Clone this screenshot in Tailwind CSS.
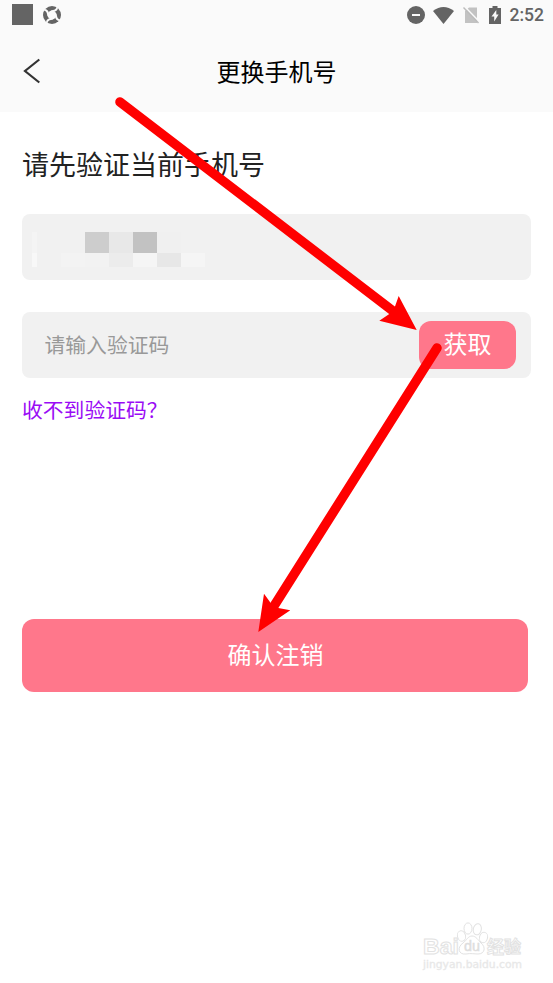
<!DOCTYPE html>
<html lang="zh-CN">
<head>
    <meta charset="UTF-8">
    <meta name="viewport" content="width=device-width, initial-scale=1.0">
    <title>更换手机号</title>
    <script src="https://cdn.jsdelivr.net/npm/@tailwindcss/browser@4"></script>
</head>
<body class="relative h-[983px] w-[553px] overflow-hidden bg-white font-['Noto_Sans_CJK_SC',sans-serif]">
    <div class="h-28 bg-[#fafafa]">
        <!-- Status bar -->
        <div class="flex h-[30px] items-center justify-between pr-[9px] pl-3 text-[#646464]">
            <div class="flex items-center gap-2.5">
                <div class="-mt-px h-[21px] w-[21px] bg-[#646464]"></div>
                <svg class="h-[18px] w-[18px]" viewBox="0 0 18 18">
                    <circle cx="9" cy="9" r="9" fill="currentColor"/>
                    <g fill="#fafafa">
                        <path d="M9 4.300L13.700 9L9 13.700L4.300 9Z"/>
                        <path id="swirl" d="M4.600 9.500C4.500 6.500 6.500 4.500 10 4C12 3.700 13 2.800 13.500 1L15 2C14.500 4.500 13 5.700 10.500 6L8 9Z"/>
                        <use href="#swirl" transform="rotate(90 9 9)"/>
                        <use href="#swirl" transform="rotate(180 9 9)"/>
                        <use href="#swirl" transform="rotate(270 9 9)"/>
                    </g>
                </svg>
            </div>
            <div class="flex items-center">
                <svg class="mr-2 h-[18px] w-[18px]" viewBox="0 0 18 18">
                    <circle cx="9" cy="9" r="9" fill="currentColor"/>
                    <path d="M5 9h8" stroke="#fafafa" stroke-width="2"/>
                </svg>
                <svg class="mr-[9px] h-[17px] w-[21px]" viewBox="0 0 21 17" fill="currentColor">
                    <path d="M0 4Q10.500-4 21 4L10.500 17Z"/>
                </svg>
                <svg class="mr-[10px] h-[18px] w-4" viewBox="0 0 16 18">
                    <path d="M6 1.500H14V17H2V5Z" fill="#c2c2c2"/>
                    <path d="M1.500 .5L16.500 16" stroke="#fafafa" stroke-width="1.600"/>
                    <path d="M.5 1.500L15.500 17" stroke="#bcbcbc" stroke-width="1.400"/>
                </svg>
                <svg class="mr-[9px] h-[18px] w-3" viewBox="0 0 12 18">
                    <path d="M3.500 0h5v2H12v16H0V2h3.500Z" fill="currentColor"/>
                    <path d="M7.300 4L2.500 10.600H5.200V15.500L9.600 8.600H7.300Z" fill="#fafafa"/>
                </svg>
                <span class="mt-0.5 font-[Roboto] text-[17.5px] leading-none font-medium">2:52</span>
            </div>
        </div>
        <!-- Title bar -->
        <div class="grid h-[82px] grid-cols-[1fr_auto_1fr] items-start">
            <svg class="mt-7 ml-[23px] h-[26px] w-[18px]" viewBox="0 0 18 26" fill="none" stroke="#333" stroke-width="2.2">
                <path d="M16.300 1.500L2 13L16.300 24.500"/>
            </svg>
            <h1 class="mt-[23px] text-[24px] leading-9 text-black">更换手机号</h1>
        </div>
    </div>

    <main class="px-[22px]">
        <h2 class="pt-8 text-[27px] leading-10 text-[#222]">请先验证当前手机号</h2>
        <!-- Masked phone number -->
        <div class="mt-[30px] flex h-[66px] rounded-lg bg-[#f1f1f1] pt-[18px] pl-2.5">
            <div class="grid h-[35px] grid-cols-[5px_24px_24px_24px_24px_24px_24px_24px] grid-rows-[21px_14px]">
                <i class="bg-[#f4f4f4]"></i>
                <i></i>
                <i></i>
                <i class="bg-[#cdcdcd]"></i>
                <i class="bg-[#e8e8e8]"></i>
                <i class="bg-[#c2c2c2]"></i>
                <i class="bg-[#f0f0f0]"></i>
                <i></i>
                <i class="bg-[#f8f8f8]"></i>
                <i></i>
                <i class="bg-[#f3f3f3]"></i>
                <i class="bg-[#f2f2f2]"></i>
                <i class="bg-[#ececec]"></i>
                <i class="bg-[#f5f5f5]"></i>
                <i class="bg-[#e7e7e7]"></i>
                <i class="bg-[#f5f5f5]"></i>
            </div>
        </div>
        <!-- Verification code -->
        <div class="mt-8 flex h-[66px] items-center justify-between rounded-lg bg-[#f1f1f1] pr-[15px] pl-[22.5px]">
            <span class="text-[20.8px] text-[#999]">请输入验证码</span>
            <button class="h-12 w-[97px] rounded-xl bg-[#ff778b] pb-1 text-[24px] leading-[44px] text-white">获取</button>
        </div>
        <a class="mt-[15px] block text-[20.8px] leading-8 text-[#9a0cf5]">收不到验证码？</a>
        <button class="mt-[194px] block h-[73px] w-[506px] rounded-xl bg-[#ff778b] pb-1 pl-px text-[24px] text-white">确认注销</button>
    </main>

    <!-- Guide arrows -->
    <svg class="absolute inset-0 h-[983px] w-[553px]" viewBox="0 0 553 983" fill="#f00">
        <path d="M120 102L393 311M437 348L274 606" stroke="#f00" stroke-width="9.5" stroke-linecap="round"/>
        <path d="M416.700 330L398.700 296L394.700 307.300L389.300 314L379.300 320.700Z"/>
        <path d="M258.300 632L264 593.700L270.700 603L278.300 608L290.300 610.300Z"/>
    </svg>

    <!-- Watermark -->
    <svg class="absolute top-[918px] left-[418px] h-[58px] w-[112px] font-['Liberation_Sans','Noto_Sans_CJK_SC',sans-serif]" viewBox="0 0 112 58" fill="#fff" stroke="#e2e2e2" stroke-width="1">
        <text x="5" y="36" font-size="22" font-weight="700" textLength="36" lengthAdjust="spacingAndGlyphs">Bai</text>
        <ellipse cx="43.500" cy="18" rx="4" ry="5.300" transform="rotate(-15 43.500 18)"/>
        <ellipse cx="50" cy="10.500" rx="4" ry="5.600"/>
        <ellipse cx="59.300" cy="11.300" rx="4" ry="5.600" transform="rotate(12 59.300 11.300)"/>
        <ellipse cx="65.500" cy="19.500" rx="4" ry="5.300" transform="rotate(15 65.500 19.500)"/>
        <path d="M54 18C58 18 60 22 63 25C68 29 67 36 60 36C56 36 53 35 48 36C40 37 39 29 45 25C49 22 50 18 54 18Z"/>
        <text x="46" y="33" font-size="15" textLength="16" lengthAdjust="spacingAndGlyphs" stroke="#dedede" stroke-width=".5" fill="#dedede">du</text>
        <text x="69" y="34.500" font-size="17" font-weight="700">经验</text>
        <text class="font-['DejaVu_Sans',sans-serif]" x="5" y="50" font-size="10.500" textLength="99" lengthAdjust="spacingAndGlyphs" fill="#e8e8e8" stroke="#e8e8e8" stroke-width=".3">jingyan.baidu.com</text>
    </svg>
</body>
</html>
